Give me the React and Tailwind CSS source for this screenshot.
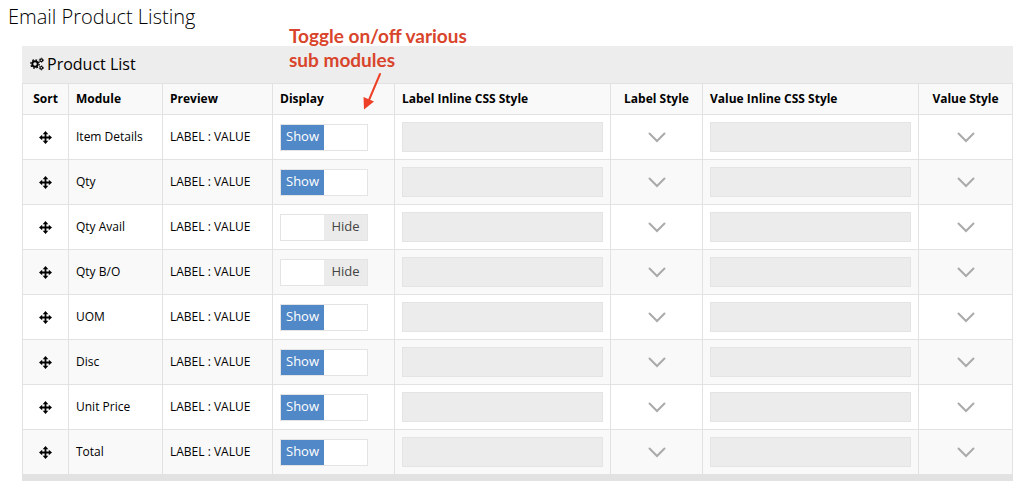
import { useState } from "react";

const initialModules = [
  { id: 1, name: "Item Details", visible: true },
  { id: 2, name: "Qty", visible: true },
  { id: 3, name: "Qty Avail", visible: false },
  { id: 4, name: "Qty B/O", visible: false },
  { id: 5, name: "UOM", visible: true },
  { id: 6, name: "Disc", visible: true },
  { id: 7, name: "Unit Price", visible: true },
  { id: 8, name: "Total", visible: true },
];

const cell = "border border-[#e2e2e2] px-[7px] py-0";

const GearsIcon = () => (
  <svg width="14" height="14" viewBox="0 0 14 14" fill="none" stroke="currentColor">
    <circle cx="5" cy="7" r="2.700" strokeWidth="1.900" />
    <circle cx="5" cy="7" r="4.200" strokeWidth="1.300" strokeDasharray="1.650 1.650" />
    <circle cx="11.300" cy="3.200" r="1.300" strokeWidth="1.100" />
    <circle cx="11.300" cy="3.200" r="2.100" strokeWidth="0.800" strokeDasharray="1.100 1.100" />
    <circle cx="11.300" cy="10.800" r="1.300" strokeWidth="1.100" />
    <circle cx="11.300" cy="10.800" r="2.100" strokeWidth="0.800" strokeDasharray="1.100 1.100" />
  </svg>
);

const MoveIcon = () => (
  <svg className="mx-auto" width="13" height="13" viewBox="0 0 13 13" fill="currentColor">
    <path d="M6.500 0 L9.300 3.200 H7.400 V5.600 H9.800 V3.700 L13 6.500 L9.800 9.300 V7.400 H7.400 V9.800 H9.300 L6.500 13 L3.700 9.800 H5.600 V7.400 H3.200 V9.300 L0 6.500 L3.200 3.700 V5.600 H5.600 V3.200 H3.700 Z" />
  </svg>
);

const DisplayToggle = ({ name, checked, onChange }) => (
  <label className="relative grid h-[27px] w-[88px] cursor-pointer grid-cols-2 border border-[#e4e4e4] bg-white text-center text-[13px] leading-[22px]">
    <input
      type="checkbox"
      className="absolute inset-0 h-full w-full cursor-pointer opacity-0"
      aria-label={`Display ${name}`}
      checked={checked}
      onChange={onChange}
    />
    {checked ? (
      <span className="bg-[#5188c7] text-white">Show</span>
    ) : (
      <span className="col-start-2 bg-[#ebebeb] text-[#444]">Hide</span>
    )}
  </label>
);

const StyleButton = ({ label }) => (
  <button type="button" aria-label={label} className="mx-auto block cursor-pointer text-[#aaa]">
    <svg width="18" height="12" viewBox="0 0 18 12" fill="none" stroke="currentColor" strokeWidth="2">
      <path d="M1.500 2.500 L9 10 L16.500 2.500" strokeLinecap="round" />
    </svg>
  </button>
);

const StyleInput = ({ label }) => (
  <input
    type="text"
    disabled
    aria-label={label}
    className="block h-[30px] w-full border border-[#e4e4e4] bg-[#ececec] px-2"
  />
);

const ModuleRow = ({ module, onToggle }) => (
  <tr className="h-[45px] bg-white even:bg-[#f9f9f9]">
    <td className={cell}>
      <MoveIcon />
    </td>
    <td className={cell}>{module.name}</td>
    <td className={cell}>LABEL : VALUE</td>
    <td className={cell}>
      <DisplayToggle name={module.name} checked={module.visible} onChange={() => onToggle(module.id)} />
    </td>
    <td className={cell}>
      <StyleInput label={`${module.name} label inline CSS`} />
    </td>
    <td className={cell}>
      <StyleButton label={`${module.name} label style`} />
    </td>
    <td className={cell}>
      <StyleInput label={`${module.name} value inline CSS`} />
    </td>
    <td className={cell}>
      <StyleButton label={`${module.name} value style`} />
    </td>
  </tr>
);

// Red callout over the panel, pointing at the Display column
const Callout = () => (
  <div className="absolute top-[-22px] left-[267px] text-[#d9452c]">
    <p className="font-['Lato',sans-serif] text-[19px] leading-6 font-bold">
      Toggle on/off various
      <br />
      sub modules
    </p>
    <svg className="ml-[72px]" width="24" height="38" viewBox="0 0 24 38">
      <path d="M19 2 L8 28" stroke="#ee4027" strokeWidth="2" strokeLinecap="round" />
      <path d="M3 37.500 L2.500 25 L13 29.500 Z" fill="#ee4027" />
    </svg>
  </div>
);

const App = () => {
  const [modules, setModules] = useState(initialModules);

  const handleToggle = (id) => {
    setModules((prev) => prev.map((m) => (m.id === id ? { ...m, visible: !m.visible } : m)));
  };

  return (
    <div className="bg-white pb-3 font-['Open_Sans',sans-serif] text-black">
      <h1 className="px-2 pt-[3px] text-[20px] leading-7 font-light">Email Product Listing</h1>

      <section className="relative mt-[15px] mr-[11px] ml-[22px] border-b-[6px] border-[#e2e2e2]">
        <div className="flex h-[37px] items-center gap-[3px] bg-[#ededed] px-2 pb-[2px]">
          <GearsIcon />
          <h2 className="text-[16px] leading-6">Product List</h2>
        </div>

        <table className="w-full table-fixed border-collapse text-left text-[12px] leading-4">
          <colgroup>
            <col className="w-[46px]" />
            <col className="w-[94px]" />
            <col className="w-[110px]" />
            <col className="w-[122px]" />
            <col />
            <col className="w-[92px]" />
            <col />
            <col className="w-[94px]" />
          </colgroup>
          <thead>
            <tr className="h-[31px] bg-[#f9f9f9]">
              <th className={`${cell} text-center`}>Sort</th>
              <th className={cell}>Module</th>
              <th className={cell}>Preview</th>
              <th className={cell}>Display</th>
              <th className={cell}>Label Inline CSS Style</th>
              <th className={`${cell} text-center`}>Label Style</th>
              <th className={cell}>Value Inline CSS Style</th>
              <th className={`${cell} text-center`}>Value Style</th>
            </tr>
          </thead>
          <tbody>
            {modules.map((module) => (
              <ModuleRow key={module.id} module={module} onToggle={handleToggle} />
            ))}
          </tbody>
        </table>

        <Callout />
      </section>
    </div>
  );
};

export default App;
